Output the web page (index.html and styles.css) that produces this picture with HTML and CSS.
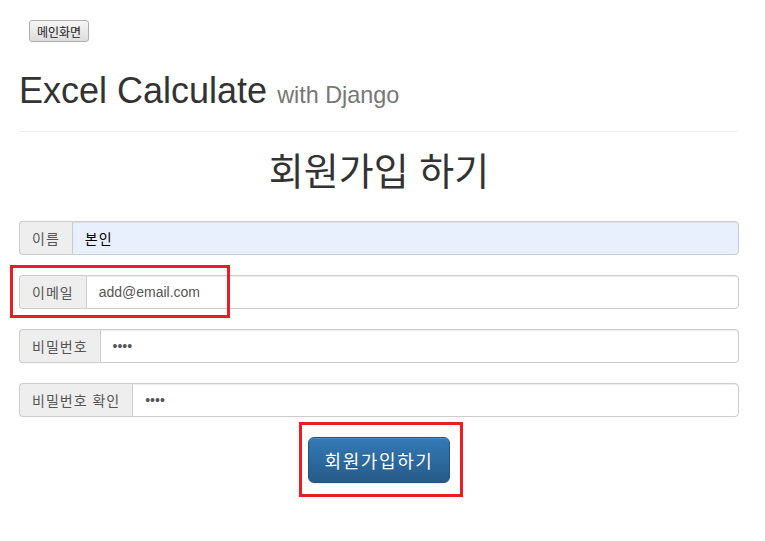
FILE: index.html
```html
<!DOCTYPE html>
<html lang="ko">
<head>
    <meta charset="UTF-8">
    <meta name="viewport" content="width=device-width, initial-scale=1.0">
    <title>회원가입</title>
    <link rel="stylesheet" href="styles.css">
</head>
<body>
    <div class="container">
        <button class="home-btn" type="button">메인화면</button>

        <div class="page-header">
            <h1>Excel Calculate <small>with Django</small></h1>
        </div>

        <h2 class="form-title">회원가입 하기</h2>

        <form class="signup-form">
            <div class="input-group">
                <span class="input-addon">이름</span>
                <input class="form-control autofilled" type="text" value="본인">
            </div>
            <div class="input-group">
                <span class="input-addon">이메일</span>
                <input class="form-control" type="email" value="add@email.com">
                <!-- annotation box -->
                <span class="mark-email"></span>
            </div>
            <div class="input-group">
                <span class="input-addon">비밀번호</span>
                <input class="form-control" type="password" value="1234">
            </div>
            <div class="input-group">
                <span class="input-addon">비밀번호 확인</span>
                <input class="form-control" type="password" value="1234">
            </div>
            <div class="submit-row">
                <div class="submit-mark">
                    <button class="btn-primary" type="button">회원가입하기</button>
                </div>
            </div>
        </form>
    </div>
</body>
</html>
```

FILE: styles.css
```css
* {
    box-sizing: border-box;
}

body {
    margin: 0;
    background-color: #fff;
    color: #333;
    font-family: "Liberation Sans", "Noto Sans CJK KR", sans-serif;
    font-size: 14px;
    line-height: 1.42857;
}

.container {
    width: 720px;
    margin-left: 19px;
    padding-top: 20px;
    padding-bottom: 40px;
}

.home-btn {
    display: block;
    height: 22px;
    width: 60px;
    margin-left: 10px;
    padding: 0;
    font-family: "Noto Sans CJK KR", sans-serif;
    font-size: 12px;
    color: #222;
    background: linear-gradient(#f6f6f6, #dddddd);
    border: 1px solid #adadad;
    border-radius: 3px;
}

.page-header {
    margin-top: 29px;
    padding-bottom: 20px;
    border-bottom: 1px solid #eee;
}

.page-header h1 {
    margin: 0;
    font-size: 36px;
    font-weight: 400;
    line-height: 1.1;
    color: #333;
}

.page-header small {
    font-size: 65%;
    color: #777;
}

.form-title {
    margin: 16px 0 32px;
    text-align: center;
    font-family: "Noto Sans CJK KR", sans-serif;
    font-size: 38px;
    font-weight: 400;
    line-height: 1.1;
    color: #333;
}

.signup-form {
    display: flex;
    flex-direction: column;
    gap: 20px;
}

.input-group {
    position: relative;
    display: flex;
    height: 34px;
}

.input-addon {
    padding: 6px 12px;
    font-family: "Noto Sans CJK KR", sans-serif;
    font-size: 14px;
    line-height: 20px;
    letter-spacing: 1px;
    color: #555;
    white-space: nowrap;
    background-color: #eee;
    border: 1px solid #ccc;
    border-right: 0;
    border-radius: 4px 0 0 4px;
}

.form-control {
    flex: 1;
    min-width: 0;
    height: 34px;
    padding: 6px 12px;
    font-family: "Liberation Sans", "Noto Sans CJK KR", sans-serif;
    font-size: 14px;
    color: #555;
    background-color: #fff;
    border: 1px solid #ccc;
    border-radius: 0 4px 4px 0;
    box-shadow: inset 0 1px 1px rgba(0,0,0,.075);
}

.form-control.autofilled {
    background-color: #e8f0fe;
    color: #000;
    letter-spacing: 1px;
}

.submit-row {
    display: flex;
    justify-content: center;
    margin-top: -15px;
    padding-left: 4px;
}

/* red annotation box round the submit button */
.submit-mark {
    display: flex;
    padding: 12px 10px 11px 6px;
    border: 3px solid #ed1c24;
}

.btn-primary {
    height: 46px;
    padding: 10px 16px;
    font-family: "Noto Sans CJK KR", sans-serif;
    font-size: 18px;
    line-height: 1.3333;
    letter-spacing: 1.6px;
    color: #fff;
    text-shadow: 0 -1px 0 rgba(0,0,0,.2);
    background: linear-gradient(#337ab7, #265a88);
    border: 1px solid #245580;
    border-radius: 6px;
    box-shadow: inset 0 1px 0 rgba(255,255,255,.15), 0 1px 1px rgba(0,0,0,.075);
}

.mark-email {
    position: absolute;
    left: -9px;
    top: -10px;
    width: 220px;
    height: 53px;
    border: 3px solid #ed1c24;
    pointer-events: none;
}
```
